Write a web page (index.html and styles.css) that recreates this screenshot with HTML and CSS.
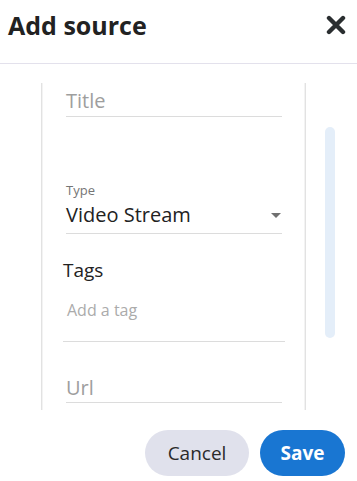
FILE: index.html
```html
<!DOCTYPE html>
<html>
<head>
<meta charset="utf-8">
<link rel="stylesheet" href="styles.css">
</head>
<body>
<div class="dialog">
  <div class="header">
    <h1 class="title">Add source</h1>
    <svg class="close" width="20" height="20" viewBox="0 0 20 20"><path d="M3 3 L17 17 M17 3 L3 17" stroke="#2a2e30" stroke-width="4.4" stroke-linecap="round" fill="none"/></svg>
  </div>
  <div class="body">
    <div class="card">
      <div class="field f-title"><span class="ph">Title</span></div>
      <div class="field f-type">
        <div class="label">Type</div>
        <div class="select"><span class="value">Video Stream</span><span class="arrow"></span></div>
      </div>
      <div class="tags">
        <div class="tags-label">Tags</div>
        <div class="tag-input"><span class="tag-ph">Add a tag</span></div>
      </div>
      <div class="field f-url"><span class="ph">Url</span></div>
    </div>
    <div class="thumb"></div>
  </div>
  <div class="footer">
    <button class="btn cancel">Cancel</button>
    <button class="btn save">Save</button>
  </div>
</div>
</body>
</html>
```

FILE: styles.css
```css
* { box-sizing: border-box; }
html, body { margin: 0; padding: 0; background: #fff; }
body { font-family: "Open Sans", "Noto Sans", sans-serif; color: #222; }
.dialog { width: 357px; height: 481px; display: flex; flex-direction: column; }
.header {
  height: 64px;
  display: flex;
  align-items: flex-start;
  justify-content: space-between;
  padding: 10px 11px 0 8px;
  border-bottom: 1px solid #e3e1ec;
}
.title { margin: 0; font-size: 25px; line-height: 30px; font-weight: 700; color: #222; }
.close { margin-top: 5px; display: block; }
.body { height: 346px; overflow: hidden; display: flex; align-items: flex-start; }
.card {
  margin: 19px 0 0 41px;
  width: 265px;
  height: 400px;
  border-left: 1px solid #e2e2e2;
  border-right: 1px solid #e2e2e2;
  box-shadow: inset 1px 0 0 #f3f3f3, inset -1px 0 0 #f3f3f3;
  padding: 0 23px 0 24px;
}
.field { border-bottom: 1px solid #dcdcdc; }
.ph { display: block; font-size: 20px; line-height: 26px; color: #9e9e9e; }
.f-title { margin-top: 5px; padding-bottom: 2px; }
.f-type { margin-top: 65px; padding-bottom: 5px; }
.label { font-size: 13px; line-height: 16px; color: #757575; }
.select { margin-top: 4px; display: flex; align-items: center; justify-content: space-between; }
.value { font-size: 20px; line-height: 26px; color: #222; }
.arrow {
  width: 0; height: 0;
  border-left: 5px solid transparent;
  border-right: 5px solid transparent;
  border-top: 5px solid #707070;
  margin-right: 1px;
}
.tags { margin: 24px -3px 0 -3px; }
.tags-label { font-size: 19px; line-height: 24px; color: #222; }
.tag-input { margin-top: 18px; padding: 0 0 21px 4px; border-bottom: 1px solid #dcdcdc; }
.tag-ph { display: block; font-size: 16px; line-height: 20px; color: #ababab; }
.f-url { margin-top: 33px; padding-bottom: 1px; }
.thumb {
  margin: 63px 0 0 19px;
  width: 10px;
  height: 211px;
  border-radius: 5px;
  background: #e4eef9;
}
.footer { display: flex; justify-content: flex-end; gap: 11px; padding: 20px 12px 0 0; }
.btn {
  height: 46px;
  border: none;
  border-radius: 23px;
  font-family: "Open Sans", "Noto Sans", sans-serif;
  font-size: 19px;
  padding: 0;
  cursor: pointer;
}
.cancel { width: 104px; background: #e0e1ec; color: #2a2a2a; }
.save { width: 85px; background: #1976d2; color: #fff; font-weight: 700; }
```
